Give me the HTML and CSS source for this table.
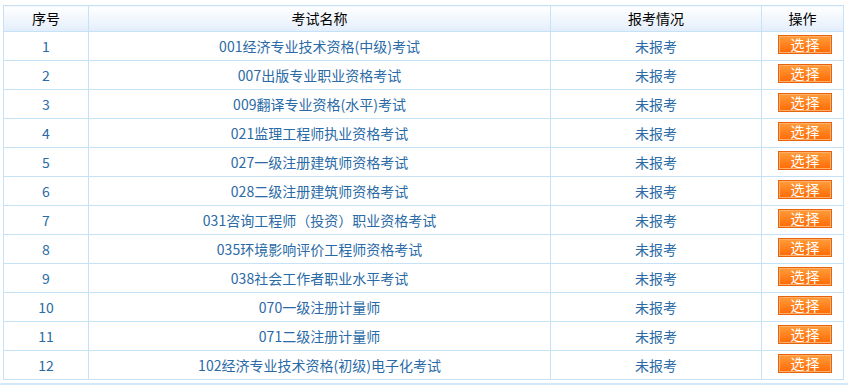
FILE: index.html
```html
<!DOCTYPE html>
<html>
<head>
<meta charset="utf-8">
<link rel="stylesheet" href="styles.css">
</head>
<body>
<div class="wrap">
<table class="grid">
<colgroup><col class="c1"><col class="c2"><col class="c3"><col class="c4"></colgroup>
<thead>
<tr><th>序号</th><th>考试名称</th><th>报考情况</th><th>操作</th></tr>
</thead>
<tbody>
<tr><td>1</td><td>001经济专业技术资格(中级)考试</td><td>未报考</td><td class="act"><span class="btn">选择</span></td></tr>
<tr><td>2</td><td>007出版专业职业资格考试</td><td>未报考</td><td class="act"><span class="btn">选择</span></td></tr>
<tr><td>3</td><td>009翻译专业资格(水平)考试</td><td>未报考</td><td class="act"><span class="btn">选择</span></td></tr>
<tr><td>4</td><td>021监理工程师执业资格考试</td><td>未报考</td><td class="act"><span class="btn">选择</span></td></tr>
<tr><td>5</td><td>027一级注册建筑师资格考试</td><td>未报考</td><td class="act"><span class="btn">选择</span></td></tr>
<tr><td>6</td><td>028二级注册建筑师资格考试</td><td>未报考</td><td class="act"><span class="btn">选择</span></td></tr>
<tr><td>7</td><td>031咨询工程师（投资）职业资格考试</td><td>未报考</td><td class="act"><span class="btn">选择</span></td></tr>
<tr><td>8</td><td>035环境影响评价工程师资格考试</td><td>未报考</td><td class="act"><span class="btn">选择</span></td></tr>
<tr><td>9</td><td>038社会工作者职业水平考试</td><td>未报考</td><td class="act"><span class="btn">选择</span></td></tr>
<tr><td>10</td><td>070一级注册计量师</td><td>未报考</td><td class="act"><span class="btn">选择</span></td></tr>
<tr><td>11</td><td>071二级注册计量师</td><td>未报考</td><td class="act"><span class="btn">选择</span></td></tr>
<tr><td>12</td><td>102经济专业技术资格(初级)电子化考试</td><td>未报考</td><td class="act"><span class="btn">选择</span></td></tr>
</tbody>
</table>
</div>
<div class="foot"></div>
</body>
</html>
```
FILE: styles.css
```css
html, body { margin: 0; padding: 0; background: #fff; }
body { font-family: "Noto Sans CJK SC", "Noto Sans", sans-serif; font-size: 14px; }
.wrap { padding: 5px 0 0 3px; }
.grid {
  border-collapse: collapse;
  table-layout: fixed;
  width: 840px;
}
.c1 { width: 85px; }
.c2 { width: 462px; }
.c3 { width: 211px; }
.c4 { width: 82px; }
.grid th, .grid td {
  border: 1px solid #c6e2f6;
  padding: 0;
  text-align: center;
  white-space: nowrap;
  overflow: hidden;
}
.grid th {
  height: 25px;
  font-weight: normal;
  color: #000;
  background: linear-gradient(#ffffff, #e3eefb);
  font-size: 14px;
  line-height: 25px;
}
.grid td {
  height: 28px;
  line-height: 28px;
  color: #2a6aa6;
  font-size: 14px;
}
.grid td.act { line-height: 0; vertical-align: top; }
.btn {
  display: inline-block;
  box-sizing: border-box;
  width: 54px;
  height: 19px;
  margin: 3px 0 0 5px;
  border: 1px solid #e8630d;
  box-shadow: inset 0 0 0 1px #ffb066;
  background: linear-gradient(#ff9d3b, #ff6a05);
  color: #fff;
  font-size: 14px;
  line-height: 17px;
  vertical-align: top;
  letter-spacing: 1px;
  text-indent: 1px;
}
.foot { margin-top: 3px; border-top: 2px solid #d3e8f8; }
```
